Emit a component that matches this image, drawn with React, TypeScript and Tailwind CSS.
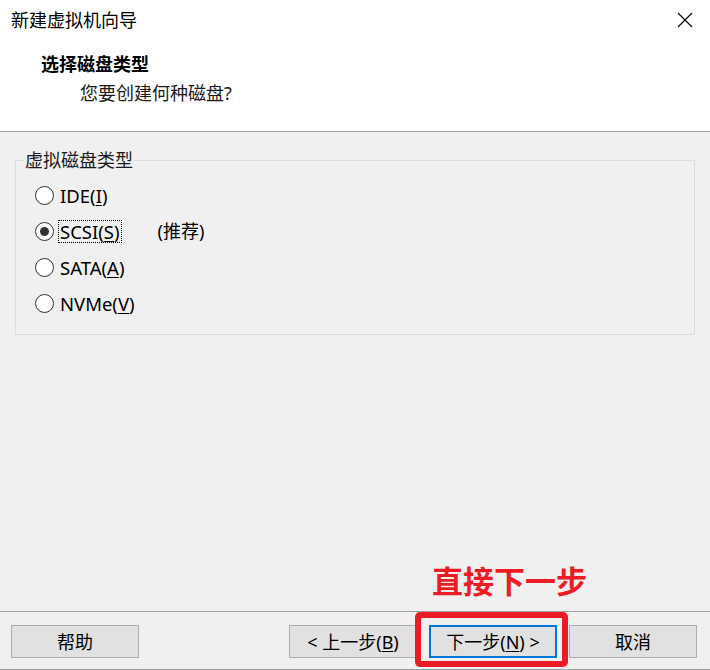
const FONT = "font-['Noto_Sans','Noto_Sans_CJK_SC',sans-serif]"

function Radio({ checked }: { checked?: boolean }) {
  return (
    <span className="flex h-[19px] w-[19px] shrink-0 items-center justify-center rounded-full border border-[#333333] bg-white">
      {checked && <span className="h-[9px] w-[9px] rounded-full bg-[#333333]" />}
    </span>
  )
}

function Btn({ children, primary }: { children: React.ReactNode; primary?: boolean }) {
  return (
    <button
      className={
        primary
          ? 'flex h-[33px] w-[128px] items-center justify-center border-2 border-[#0078d7] bg-[#e1e1e1] text-[18px] leading-none text-black'
          : 'flex h-[33px] w-[128px] items-center justify-center border border-[#adadad] bg-[#e1e1e1] text-[18px] leading-none text-black'
      }
    >
      {children}
    </button>
  )
}

export default function App() {
  const opts = [
    { label: 'IDE(', key: 'I', checked: false },
    { label: 'SCSI(', key: 'S', checked: true },
    { label: 'SATA(', key: 'A', checked: false },
    { label: 'NVMe(', key: 'V', checked: false },
  ]

  return (
    <div className={`relative flex h-[670px] w-[710px] flex-col bg-[#f0f0f0] text-black ${FONT}`}>
      {/* 标题栏 + 头部 */}
      <div className="flex h-[131px] flex-col bg-white">
        <div className="flex h-[40px] items-center justify-between pl-[11px] pr-[17px]">
          <span className="text-[18px] leading-none">新建虚拟机向导</span>
          <svg width="16" height="16" viewBox="0 0 16 16" fill="none" stroke="#000" strokeWidth="1.1">
            <path d="M1 1L15 15M15 1L1 15" />
          </svg>
        </div>
        <div className="pl-[41px] pt-[12px]">
          <div className="text-[18px] font-bold leading-[24px]">选择磁盘类型</div>
          <div className="mt-[5px] pl-[39px] text-[18px] leading-[24px] text-[#1a1a1a]">您要创建何种磁盘?</div>
        </div>
      </div>

      {/* 内容区 */}
      <div className="flex-1 border-t border-[#a0a0a0] pt-[16px]">
        <fieldset className="ml-[15px] mr-[15px] border border-[#dcdcdc] p-0 pb-[13px] pt-[5px]">
          <legend className="ml-[8px] px-[1px] text-[18px] leading-[24px] text-[#1a1a1a]">虚拟磁盘类型</legend>
          {opts.map((o) => (
            <div key={o.key} className="flex h-[36px] items-center pl-[19px]">
              <Radio checked={o.checked} />
              <span
                className={
                  o.checked
                    ? 'ml-[5px] px-[1px] text-[18.5px] leading-[21px] outline-1 outline-dotted outline-black'
                    : 'ml-[5px] px-[1px] text-[18.5px] leading-[21px]'
                }
              >
                {o.label}
                <span className="underline underline-offset-2">{o.key}</span>)
              </span>
              {o.checked && <span className="ml-[37px] text-[18px] leading-[21px]">(推荐)</span>}
            </div>
          ))}
        </fieldset>
      </div>

      {/* 底部按钮 */}
      <div className="flex h-[59px] items-start border-y border-[#a0a0a0] pt-[13px]">
        <div className="ml-[11px]">
          <Btn>帮助</Btn>
        </div>
        <div className="ml-auto mr-[13px] flex gap-[12px]">
          <Btn>
            &lt; 上一步(<span className="underline underline-offset-2">B</span>)
          </Btn>
          <Btn primary>
            下一步(<span className="underline underline-offset-2">N</span>) &gt;
          </Btn>
          <Btn>取消</Btn>
        </div>
      </div>

      {/* 标注 */}
      <div className="absolute left-[432px] top-[566px] text-[31px] font-bold leading-none text-[#ed1c24]">
        直接下一步
      </div>
      <div className="absolute left-[415px] top-[612px] h-[55px] w-[153px] rounded-[5px] border-[6px] border-[#ed1c24]" />
    </div>
  )
}
